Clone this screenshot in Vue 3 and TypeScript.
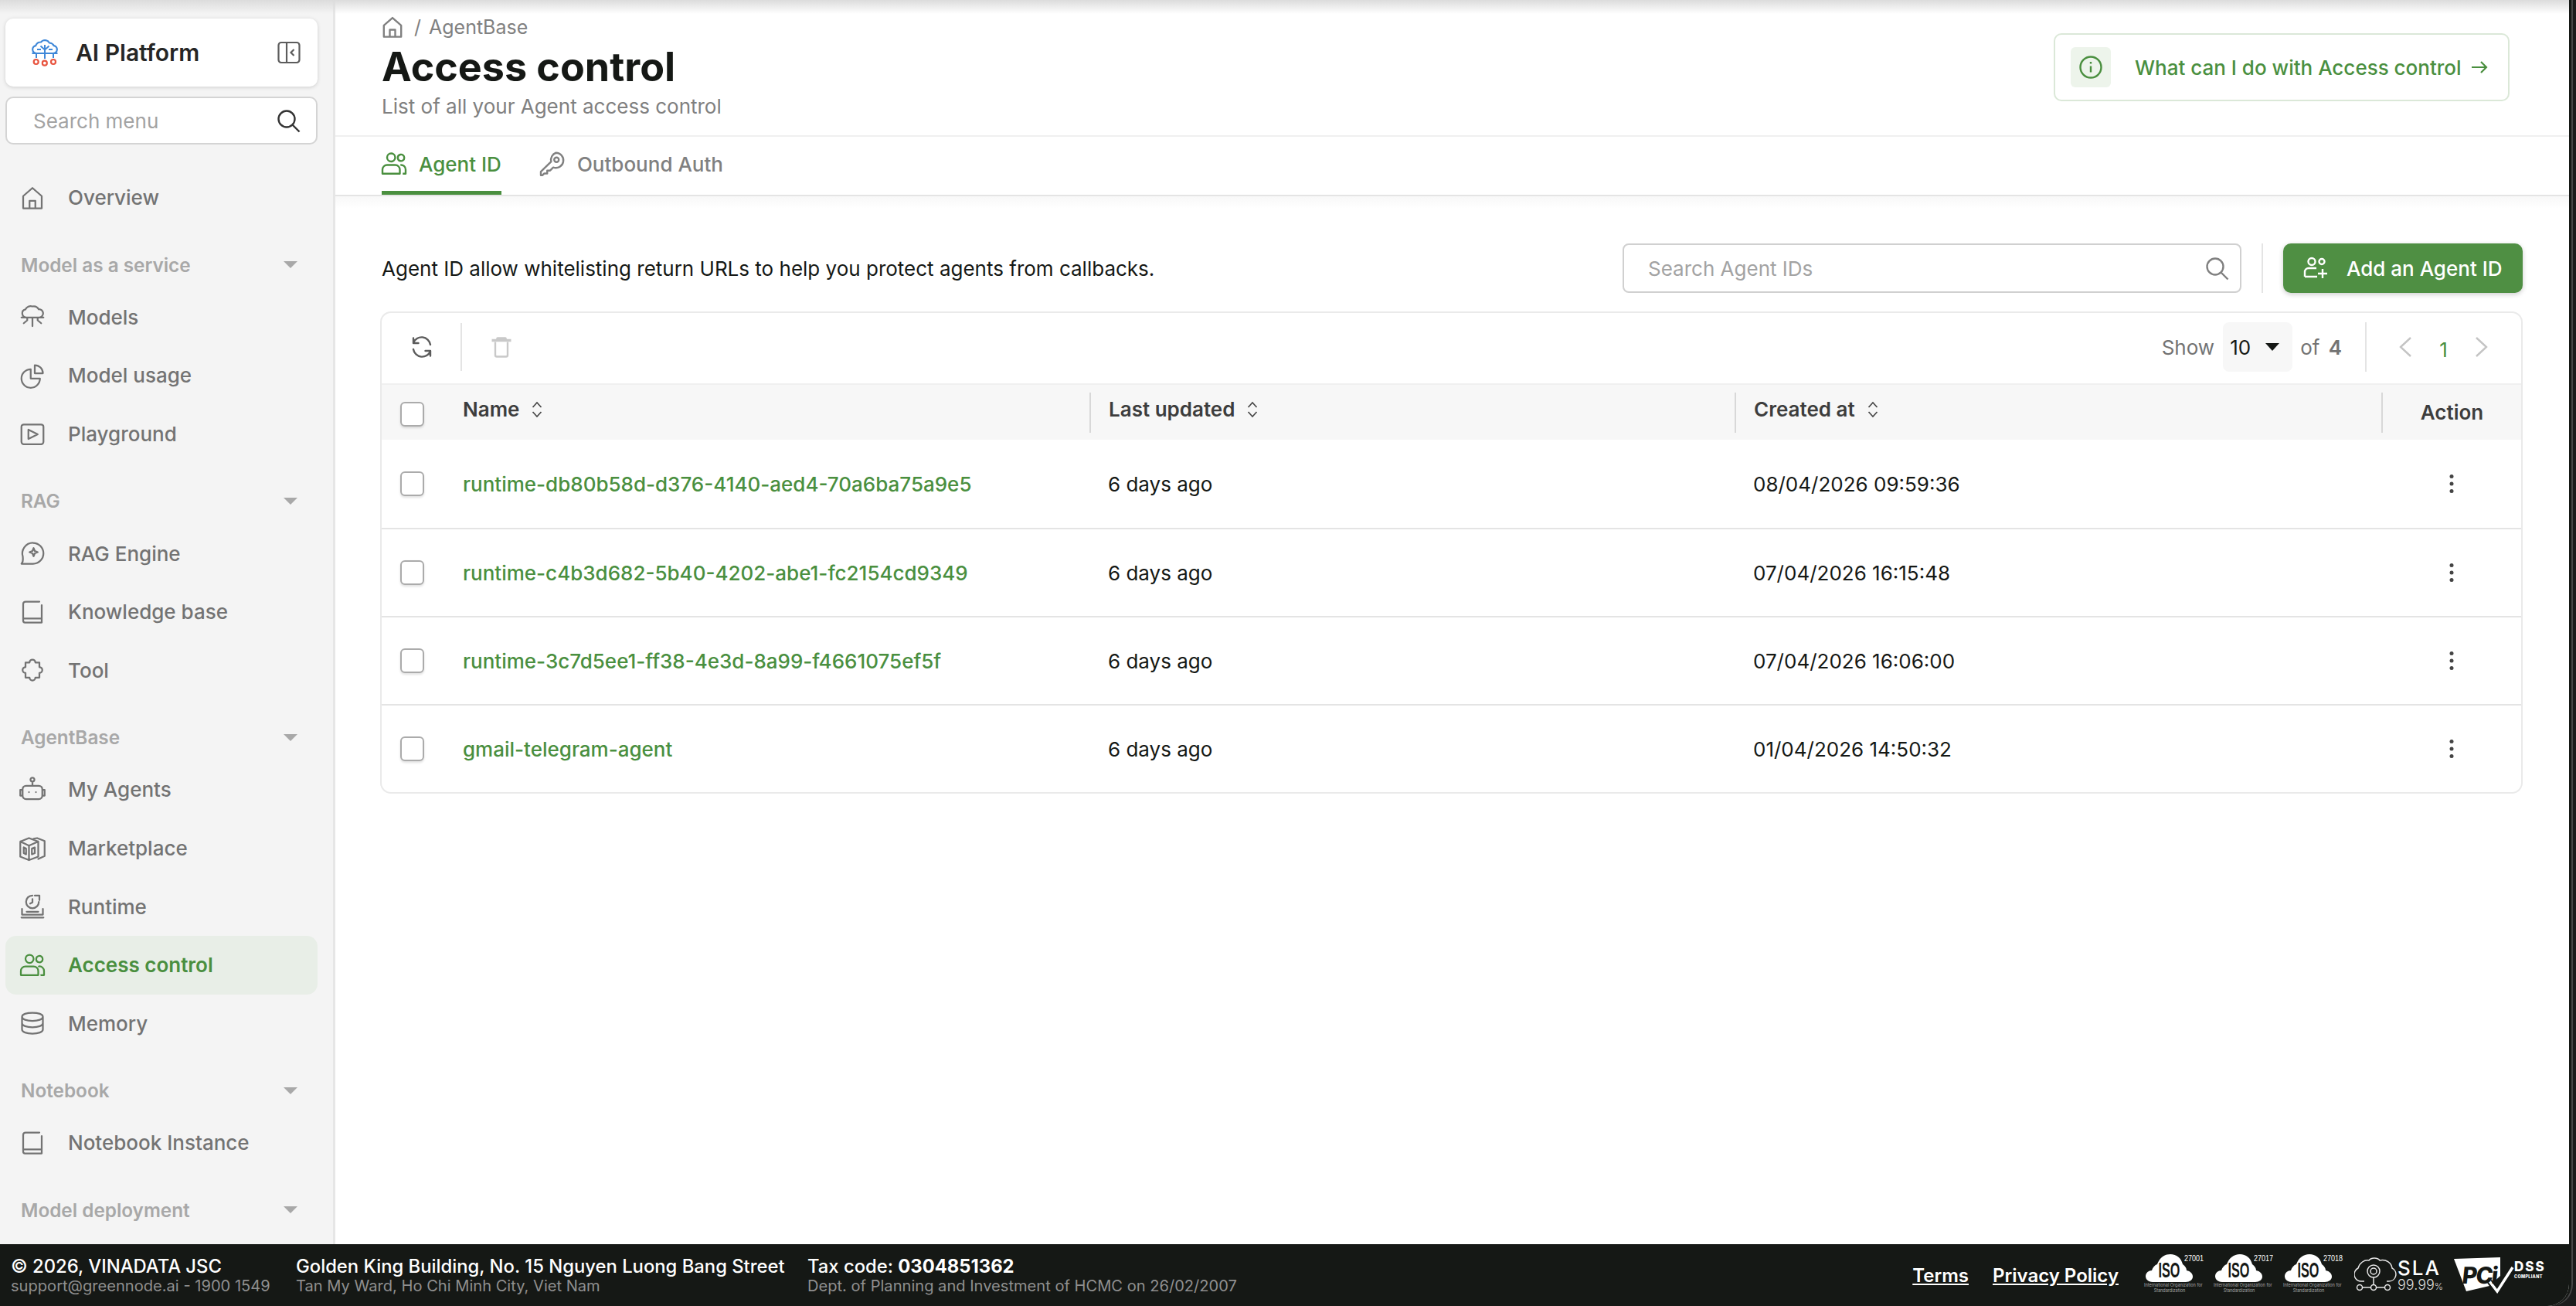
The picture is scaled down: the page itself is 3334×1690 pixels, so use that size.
<script setup lang="ts">
interface NavItem { label: string; icon: string; active?: boolean }
interface NavGroup { title?: string; items: NavItem[] }

const groups: NavGroup[] = [
  { items: [{ label: 'Overview', icon: 'home' }] },
  { title: 'Model as a service', items: [
    { label: 'Models', icon: 'models' },
    { label: 'Model usage', icon: 'pie' },
    { label: 'Playground', icon: 'play' },
  ] },
  { title: 'RAG', items: [
    { label: 'RAG Engine', icon: 'chat' },
    { label: 'Knowledge base', icon: 'book' },
    { label: 'Tool', icon: 'puzzle' },
  ] },
  { title: 'AgentBase', items: [
    { label: 'My Agents', icon: 'robot' },
    { label: 'Marketplace', icon: 'boxes' },
    { label: 'Runtime', icon: 'runtime' },
    { label: 'Access control', icon: 'users', active: true },
    { label: 'Memory', icon: 'db' },
  ] },
  { title: 'Notebook', items: [{ label: 'Notebook Instance', icon: 'book' }] },
  { title: 'Model deployment', items: [] },
]

// stroke icons, 24x24 box
const icons: Record<string, string> = {
  home: 'M4 21V10.5L12 3.5l8 7V21zM9.5 21v-6.5h5V21',
  models: 'M6.5 12.5a3.5 3.5 0 0 1-.6-6.9A5 5 0 0 1 12 3a5 5 0 0 1 5.4 2.5 3.5 3.5 0 0 1 .6 7zM2.5 12.5h19M12 12.5V20M7.5 12.5v2.5l-3 2.5M16.5 12.5v2.5l3 2.5',
  pie: 'M10.5 6.5a8 8 0 1 0 8 8h-8zM14 3a7 7 0 0 1 7 7h-7z',
  play: 'M4.5 3.5h15a2 2 0 0 1 2 2v13a2 2 0 0 1-2 2h-15a2 2 0 0 1-2-2v-13a2 2 0 0 1 2-2zM8.5 8v8l8-4z',
  chat: 'M12.5 3a9 9 0 0 1 0 18H2.5c1.5-1.5 1.5-3 1.2-6A9.2 9.2 0 0 1 12.5 3zM13 7.5l1 2.5 2.5 1-2.5 1-1 2.5-1-2.5-2.5-1 2.5-1z',
  book: 'M18 3H6a2 2 0 0 0-2 2v14.5A1.5 1.5 0 0 0 5.5 21H20V6M5 17.5h15',
  puzzle: 'M9.5 5.5a2.5 2.5 0 1 1 5 0h3.5v4a2.5 2.5 0 1 1 0 5v4h-3.5a2.5 2.5 0 1 1-5 0H6v-4a2.5 2.5 0 1 1 0-5v-4z',
  robot: 'M12 1.5a1.7 1.7 0 1 1 0 3.4 1.7 1.7 0 0 1 0-3.4zM12 5v3.5M6.5 8.5h11a3 3 0 0 1 3 3V17a3 3 0 0 1-3 3h-11a3 3 0 0 1-3-3v-5.5a3 3 0 0 1 3-3zM3.5 12h-2v5h2M20.5 12h2v5h-2M9 14v.01M15 14v.01',
  boxes: 'M9 3l8 3v13l-8 3-7.5-3V6zM1.5 6L9 9.5 17 6M9 9.5V22M13 3.5l3-.5 6.5 2.5v13L17 21M4.5 11v5l2 1v-5zM11.5 12v5l2.5-1v-5z',
  runtime: 'M3 14v5h18v-5M2.5 21.5h19M7 16.5h10M12 2.5a5.5 5.5 0 1 0 5.5 5.500M14 2.500h4v4M12 5.500v3l-2 1',
  users: 'M9.5 3a3.5 3.5 0 1 1 0 7 3.5 3.5 0 0 1 0-7zM17.5 4a2.8 2.8 0 1 1 0 5.5 2.8 2.8 0 0 1 0-5.5zM2 20.5V17a4 4 0 0 1 4-4h7a4 4 0 0 1 4 4v3.500zM17.500 13a4 4 0 0 1 4.500 4v3.500h-2.500',
  db: 'M12 3c5 0 9 1.3 9 3.5s-4 3.5-9 3.5-9-1.3-9-3.5S7 3 12 3zM3 6.5v11C3 19.7 7 21 12 21s9-1.3 9-3.5v-11M3 12c0 2.2 4 3.5 9 3.5s9-1.3 9-3.5',
}

const sortPath = 'M1.5 9L7 3l5.5 6M1.5 15L7 21l5.5-6'

const rows = [
  { name: 'runtime-db80b58d-d376-4140-aed4-70a6ba75a9e5', created: '08/04/2026 09:59:36' },
  { name: 'runtime-c4b3d682-5b40-4202-abe1-fc2154cd9349', created: '07/04/2026 16:15:48' },
  { name: 'runtime-3c7d5ee1-ff38-4e3d-8a99-f4661075ef5f', created: '07/04/2026 16:06:00' },
  { name: 'gmail-telegram-agent', created: '01/04/2026 14:50:32' },
]
const isoBadges = ['27001', '27017', '27018']
</script>

<template>
  <div class="screen">
    <div class="window">
      <div class="workspace">
        <aside class="sidebar">
          <div class="brand">
            <svg class="brand-logo" viewBox="0 0 36 35" fill="none">
              <path d="M7 18a5 5 0 0 1-.8-9.900A7 7 0 0 1 13 3.500 6.800 6.800 0 0 1 18 1a7 7 0 0 1 6 3.500 7 7 0 0 1 5.800 3.600A5 5 0 0 1 29 18z" stroke="#3f88d8" stroke-width="2.200" />
              <path d="M1.500 18h33M18 7v18M12.500 8.500l5.500 5 5.500-5M8 13h5M23 13h5M7 18v6M29 18v6" stroke="#3f88d8" stroke-width="2" />
              <circle cx="6.700" cy="29" r="3" stroke="#e8543f" stroke-width="2.200" />
              <circle cx="17.800" cy="30.700" r="3" stroke="#e8543f" stroke-width="2.200" />
              <circle cx="29" cy="29" r="3" stroke="#e8543f" stroke-width="2.200" />
            </svg>
            <span class="brand-name">AI Platform</span>
            <svg class="brand-toggle" viewBox="0 0 30 30" fill="none" stroke="#5c5c5c" stroke-width="2.200">
              <rect x="1.500" y="2" width="27" height="26" rx="3.500" />
              <path d="M12 2v26M21.500 11l-4 4 4 4" />
            </svg>
          </div>
          <div class="menu-search">
            <span>Search menu</span>
            <svg viewBox="0 0 32 32" fill="none" stroke="#333" stroke-width="2.400">
              <circle cx="14" cy="14" r="10.500" />
              <path d="M21.500 21.500l9 9" />
            </svg>
          </div>
          <nav class="nav">
            <section v-for="(group, g) in groups" :key="g" class="nav-group">
              <div v-if="group.title" class="nav-title">
                <span>{{ group.title }}</span>
                <i class="nav-caret"></i>
              </div>
              <a v-for="item in group.items" :key="item.label" class="nav-item" :class="{ active: item.active }">
                <svg viewBox="2 2 20 20" fill="none" stroke="currentColor" stroke-width="1.500" stroke-linejoin="round" stroke-linecap="round">
                  <path :d="icons[item.icon]" />
                </svg>
                <span>{{ item.label }}</span>
              </a>
            </section>
          </nav>
        </aside>

        <main class="main">
          <header class="page-head">
            <div>
              <div class="crumbs">
                <svg viewBox="2 2 20 20" fill="none" stroke="#808080" stroke-width="1.700" stroke-linejoin="round">
                  <path :d="icons.home" />
                </svg>
                <span>/</span>
                <span>AgentBase</span>
              </div>
              <h1>Access control</h1>
              <p>List of all your Agent access control</p>
            </div>
            <a class="help">
              <span class="help-icon">
                <svg viewBox="0 0 32 32" fill="none" stroke="#4a8f3f" stroke-width="2.400">
                  <circle cx="16" cy="16" r="13.500" />
                  <path d="M16 14.500v8M16 9v2.600" />
                </svg>
              </span>
              <span class="help-text">What can I do with Access control</span>
              <svg class="help-arrow" viewBox="0 0 22 18" fill="none" stroke="#4a8f3f" stroke-width="2.200">
                <path d="M1 9h19M13 2l7 7-7 7" />
              </svg>
            </a>
          </header>

          <div class="tabs">
            <a class="tab active">
              <svg viewBox="2 2 20 20" fill="none" stroke="currentColor" stroke-width="1.600" stroke-linejoin="round">
                <path :d="icons.users" />
              </svg>
              Agent ID
            </a>
            <a class="tab">
              <svg viewBox="2 2 20 20" fill="none" stroke="currentColor" stroke-width="1.600" stroke-linejoin="round">
                <path d="M15 2.500a6.500 6.500 0 1 1-2.300 12.600L10 17.800H7.500v2.500H5l-1.500 1.500H2v-3l8.900-8.700A6.500 6.500 0 0 1 15 2.500z" />
                <circle cx="15.500" cy="8.500" r="2" />
              </svg>
              Outbound Auth
            </a>
          </div>

          <div class="content">
            <div class="intro">
              <p>Agent ID allow whitelisting return URLs to help you protect agents from callbacks.</p>
              <div class="agent-search">
                <span>Search Agent IDs</span>
                <svg viewBox="0 0 32 32" fill="none" stroke="#808080" stroke-width="2.400">
                  <circle cx="14" cy="14" r="10.500" />
                  <path d="M21.500 21.500l9 9" />
                </svg>
              </div>
              <i class="vline"></i>
              <button class="add-btn">
                <svg viewBox="0 0 32 32" fill="none" stroke="#fff" stroke-width="2.400">
                  <circle cx="11" cy="7.500" r="4.500" />
                  <circle cx="24" cy="7.500" r="3.500" />
                  <path d="M2 27v-6a5 5 0 0 1 5-5h10M2 27h16M25 17v12M19 23h12" />
                </svg>
                Add an Agent ID
              </button>
            </div>

            <div class="card">
              <div class="card-bar">
                <button class="bar-btn">
                  <svg viewBox="0 0 28 28" fill="none" stroke="#5c5c5c" stroke-width="2.400" stroke-linecap="round" stroke-linejoin="round">
                    <path d="M3 8.500A11.500 11.500 0 0 1 25 11M3 2.500v6.500h6.500M25 19.500A11.500 11.500 0 0 1 3 17M25 25.500V19h-6.500" />
                  </svg>
                </button>
                <i class="bar-line"></i>
                <button class="bar-btn">
                  <svg viewBox="0 0 28 28" fill="none" stroke="#c9c9c9" stroke-width="2.400" stroke-linejoin="round">
                    <path d="M6 7.500v17a2 2 0 0 0 2 2h12a2 2 0 0 0 2-2v-17" />
                    <path d="M1.500 5.500h25M9 5.500V3h10v2.500" stroke-width="3.600" />
                  </svg>
                </button>
                <div class="pager">
                  <span class="pager-label">Show</span>
                  <span class="page-size">10<i></i></span>
                  <span class="pager-label">of <b>4</b></span>
                  <i class="pager-line"></i>
                  <svg class="chev" viewBox="0 0 18 28" fill="none" stroke="#c4c4c4" stroke-width="2.400"><path d="M16 2L3 14l13 12" /></svg>
                  <span class="page-no">1</span>
                  <svg class="chev" viewBox="0 0 18 28" fill="none" stroke="#c4c4c4" stroke-width="2.400"><path d="M2 2l13 12L2 26" /></svg>
                </div>
              </div>

              <div class="row head">
                <div class="cell-check"><i class="check"></i></div>
                <div class="cell-name">Name
                  <svg class="sort" viewBox="0 0 14 24" fill="none" stroke="#444" stroke-width="1.600"><path :d="sortPath" /></svg>
                </div>
                <div class="cell">Last updated
                  <svg class="sort" viewBox="0 0 14 24" fill="none" stroke="#444" stroke-width="1.600"><path :d="sortPath" /></svg>
                </div>
                <div class="cell">Created at
                  <svg class="sort" viewBox="0 0 14 24" fill="none" stroke="#444" stroke-width="1.600"><path :d="sortPath" /></svg>
                </div>
                <div class="cell-action">Action</div>
              </div>

              <div v-for="row in rows" :key="row.name" class="row">
                <div class="cell-check"><i class="check"></i></div>
                <a class="cell-name link">{{ row.name }}</a>
                <div class="cell">6 days ago</div>
                <div class="cell">{{ row.created }}</div>
                <div class="cell-action">
                  <svg class="kebab" viewBox="0 0 6 26" fill="#444">
                    <circle cx="3" cy="3.500" r="2.500" /><circle cx="3" cy="13" r="2.500" /><circle cx="3" cy="22.500" r="2.500" />
                  </svg>
                </div>
              </div>
            </div>
          </div>
        </main>
      </div>

      <footer class="footer">
        <div class="foot-col first">
          <div class="foot-main">© 2026, VINADATA JSC</div>
          <div class="foot-sub">support@greennode.ai - 1900 1549</div>
        </div>
        <div class="foot-col second">
          <div class="foot-main">Golden King Building, No. 15 Nguyen Luong Bang Street</div>
          <div class="foot-sub">Tan My Ward, Ho Chi Minh City, Viet Nam</div>
        </div>
        <div class="foot-col">
          <div class="foot-main">Tax code: <b>0304851362</b></div>
          <div class="foot-sub">Dept. of Planning and Investment of HCMC on 26/02/2007</div>
        </div>
        <div class="foot-right">
          <a class="foot-link">Terms</a>
          <a class="foot-link">Privacy Policy</a>
          <div class="badges">
            <div v-for="iso in isoBadges" :key="iso" class="iso">
              <svg viewBox="0 0 61 36" fill="#fff">
                <path d="M9 36C3 36 0 32 0 28.500 0 24 4 21 8 21 9 17 12 14 15 13 18 5 24 0 32 0 40 0 46 5 48 13 51 15 53 18 53 21 58 22 61 25 61 29 61 33 57 36 52 36Z" />
              </svg>
              <span class="iso-word">ISO</span>
              <span class="iso-no">{{ iso }}</span>
              <span class="iso-cap">International Organization for<br />Standardization</span>
            </div>
            <div class="sla">
              <svg viewBox="0 0 56 46" fill="none" stroke="#e8e8e8" stroke-width="1.500">
                <path d="M13 31H10A9 9 0 0 1 5 14C7 7 13 3 19 4c3-4 11-4 14 0 8-2 15 3 16 10a9 9 0 0 1-4 17H42" />
                <circle cx="25" cy="18" r="8" />
                <circle cx="25" cy="18" r="4" />
                <path d="M25 26v13M8 39h34" />
                <circle cx="7" cy="39" r="3.500" fill="#151815" />
                <circle cx="25" cy="39" r="3.500" fill="#151815" />
                <circle cx="43" cy="39" r="3.500" fill="#151815" />
              </svg>
              <div class="sla-text">
                <span class="sla-word">SLA</span>
                <span class="sla-num">99.99<small>%</small></span>
              </div>
            </div>
            <div class="pci">
              <svg viewBox="0 0 82 48" class="pci-shape">
                <polygon points="0,3 60,1 60,25 46,38 16,45" fill="#fff" />
                <path d="M46 32l10 15 20-33" fill="none" stroke="#151815" stroke-width="7" />
                <path d="M46 32l10 13 20-31" fill="none" stroke="#fff" stroke-width="3.500" />
              </svg>
              <span class="pci-word">PCi</span>
              <span class="dss">DSS<small>COMPLIANT</small></span>
            </div>
          </div>
        </div>
      </footer>
    </div>
  </div>
</template>

<style>
html, body { margin: 0; padding: 0; background: #1c1c1c; }
</style>

<style scoped>
* { box-sizing: border-box; }

.screen {
  width: 100vw;
  height: 100vh;
  overflow: hidden;
  padding-right: 9px;
  background: #1c1c1c;
  font-family: Inter, "Noto Sans", sans-serif;
  color: #151815;
}

.window {
  height: 100%;
  display: flex;
  flex-direction: column;
  background: #fff;
  border-radius: 0 0 28px 0;
  box-shadow: 3px 0 0 0 #151815, 5px 0 0 0 #474747;
  overflow: hidden;
}

.workspace {
  flex: 1;
  min-height: 0;
  display: flex;
  position: relative;
}

/* thin grey fade along the top edge of the window */
.workspace::before {
  content: "";
  position: absolute;
  inset: 0 0 auto 0;
  height: 18px;
  background: linear-gradient(#dcdcdc, rgba(255, 255, 255, 0));
  pointer-events: none;
  z-index: 2;
}

.sidebar {
  width: 434px;
  flex: none;
  padding: 24px 20px 0 7px;
  background: #f4f4f4;
  border-right: 3px solid #e6e6e6;
  overflow: hidden;
}

.brand {
  height: 88px;
  display: flex;
  align-items: center;
  padding: 0 22px 0 33px;
  background: #fff;
  border-radius: 10px;
  box-shadow: 0 1px 5px rgba(0, 0, 0, 0.16);
}

.brand-logo { width: 36px; height: 35px; }
.brand-name { margin-left: 22px; font-size: 30px; font-weight: 600; color: #262626; flex: 1; }
.brand-toggle { width: 30px; height: 30px; }

.menu-search {
  height: 62px;
  margin-top: 13px;
  padding: 0 20px 0 34px;
  display: flex;
  align-items: center;
  justify-content: space-between;
  background: #fff;
  border: 2px solid #d4d4d4;
  border-radius: 10px;
  font-size: 26px;
  color: #a3a3a3;
}

.menu-search svg { width: 32px; height: 32px; }

.nav { margin-top: 31px; }

.nav-group { margin-bottom: 19px; }

.nav-title {
  height: 60px;
  display: flex;
  align-items: center;
  justify-content: space-between;
  padding: 0 26px 0 20px;
  font-size: 24.3px;
  font-weight: 600;
  color: #a8a8a8;
}

.nav-caret {
  border-left: 9px solid transparent;
  border-right: 9px solid transparent;
  border-top: 9px solid #a8a8a8;
}

.nav-item {
  height: 75.6px;
  display: flex;
  align-items: center;
  gap: 31px;
  padding-left: 20px;
  border-radius: 14px;
  font-size: 26px;
  font-weight: 500;
  color: #737373;
}

.nav-item svg { width: 30px; height: 30px; flex: none; overflow: visible; }

.nav-item.active {
  background: #e8eee7;
  color: #4a8f3f;
  font-weight: 600;
}

.main {
  flex: 1;
  min-width: 0;
  display: flex;
  flex-direction: column;
}

.page-head {
  height: 177px;
  padding: 20px 77px 0 60px;
  display: flex;
  justify-content: space-between;
  align-items: flex-start;
  border-bottom: 2px solid #f0f0f0;
}

.crumbs {
  display: flex;
  align-items: center;
  gap: 10px;
  height: 30px;
  font-size: 25px;
  color: #808080;
}

.crumbs svg { width: 28px; height: 28px; margin-right: 4px; }

h1 {
  margin: 7px 0 0;
  font-size: 52px;
  line-height: 60px;
  font-weight: 700;
  color: #151815;
}

.page-head p {
  margin: 4px 0 0;
  font-size: 26px;
  line-height: 34px;
  color: #808080;
}

.help {
  margin-top: 23px;
  width: 590px;
  height: 88px;
  display: flex;
  align-items: center;
  padding: 0 26px 0 20px;
  border: 2px solid #dbe8d8;
  border-radius: 10px;
  color: #4a8f3f;
  font-size: 26px;
  font-weight: 500;
}

.help-icon {
  width: 52px;
  height: 52px;
  flex: none;
  display: flex;
  align-items: center;
  justify-content: center;
  background: #edf4eb;
  border-radius: 6px;
}

.help-icon svg { width: 32px; height: 32px; }
.help-text { margin-left: 31px; flex: 1; white-space: nowrap; }
.help-arrow { width: 22px; height: 18px; flex: none; }

.tabs {
  height: 77px;
  padding-left: 60px;
  display: flex;
  gap: 50px;
  border-bottom: 2px solid #e4e4e4;
}

.tab {
  height: 75px;
  display: flex;
  align-items: center;
  gap: 17px;
  font-size: 26px;
  font-weight: 500;
  color: #808080;
  border-bottom: 5px solid transparent;
}

.tab svg { width: 30px; height: 30px; overflow: visible; margin-left: 1px; }
.tab.active { color: #4a8f3f; border-bottom-color: #4a8f3f; }

.content {
  flex: 1;
  padding: 61px 60px 0 58px;
  background: linear-gradient(#f8f8f8, #fff 16px);
}

.intro {
  height: 64px;
  display: flex;
  align-items: center;
}

.intro p {
  flex: 1;
  margin: 0 0 0 2px;
  font-size: 26px;
  color: #151815;
}

.agent-search {
  width: 801px;
  height: 64px;
  padding: 0 14px 0 31px;
  display: flex;
  align-items: center;
  justify-content: space-between;
  border: 2px solid #d0d0d0;
  border-radius: 8px;
  font-size: 26px;
  color: #a3a3a3;
}

.agent-search svg { width: 32px; height: 32px; }

.vline {
  width: 2px;
  height: 64px;
  margin: 0 26px;
  background: #e4e4e4;
}

.add-btn {
  width: 310px;
  height: 64px;
  display: flex;
  align-items: center;
  gap: 24px;
  padding: 0 0 0 26px;
  border: 0;
  border-radius: 10px;
  background: #4f8f43;
  box-shadow: 0 2px 6px rgba(0, 0, 0, 0.2);
  color: #fff;
  font: 500 26px Inter, sans-serif;
}

.add-btn svg { width: 32px; height: 32px; }

.card {
  margin-top: 24px;
  border: 2px solid #eaeaea;
  border-radius: 14px;
  overflow: hidden;
}

.card-bar {
  height: 91px;
  padding: 0 0 3px 38px;
  display: flex;
  align-items: center;
}

.bar-btn {
  display: flex;
  padding: 0;
  border: 0;
  background: none;
}

.bar-btn svg { width: 28px; height: 28px; }

.bar-line {
  width: 2px;
  height: 62px;
  margin: 0 37px 0 36px;
  background: #e4e4e4;
}

.pager {
  margin-left: auto;
  padding-right: 42px;
  display: flex;
  align-items: center;
  font-size: 26px;
  color: #737373;
}

.pager b { font-weight: 600; color: #737373; margin-left: 4px; }

.page-size {
  width: 90px;
  height: 64px;
  margin: 0 10px 0 11px;
  padding: 0 17px 0 9px;
  display: flex;
  align-items: center;
  justify-content: space-between;
  background: #f7f7f7;
  border-radius: 8px;
  color: #151815;
}

.page-size i {
  border-left: 9px solid transparent;
  border-right: 9px solid transparent;
  border-top: 10px solid #151815;
}

.pager-line {
  width: 2px;
  height: 64px;
  margin: 0 41px 0 30px;
  background: #e4e4e4;
}

.chev { width: 18px; height: 28px; }
.page-no { width: 81px; text-align: center; color: #4a8f3f; padding-top: 6px; }

.row {
  height: 114px;
  display: grid;
  grid-template-columns: 105px 811px 835px 837px 1fr;
  align-items: center;
  font-size: 26px;
  border-top: 2px solid #e4e4e4;
}

.row.head {
  height: 73px;
  background: #f7f7f7;
  border-top: 2px solid #f0f0f0;
  font-weight: 600;
  color: #3d3d3d;
}

/* first data row sits directly under the grey header */
.row.head + .row { border-top: 0; }

.cell-check { padding-left: 24px; display: flex; }
.head .cell-check { padding-top: 4px; }

.check {
  width: 31px;
  height: 32px;
  background: #fff;
  border: 2px solid #ababab;
  border-radius: 6px;
  box-shadow: 0 2px 3px rgba(0, 0, 0, 0.12);
}

.cell-name,
.cell {
  display: flex;
  align-items: center;
  gap: 16px;
}

.head .cell-name,
.head .cell { padding-bottom: 8px; }

.cell { padding-left: 24px; }
.head .cell { padding-left: 23px; }

.head .cell,
.head .cell-action { height: 52px; border-left: 2px solid #d8d8d8; }

.cell-action { display: flex; align-items: center; justify-content: center; }

.link { color: #4a8f3f; font-weight: 500; }

.sort { width: 14px; height: 24px; }
.kebab { width: 6px; height: 26px; }

.footer {
  height: 80px;
  flex: none;
  display: flex;
  align-items: center;
  padding-left: 14px;
  background: #151815;
  color: #fff;
}

.foot-col { flex: none; }
.foot-col.first { width: 369px; }
.foot-col.second { width: 662px; }
.foot-main { font-size: 23.8px; line-height: 28px; font-weight: 500; }
.foot-main b { font-weight: 700; }
.foot-sub { font-size: 20.1px; line-height: 22px; color: #8f8f8f; }

.foot-right {
  margin-left: auto;
  padding-right: 29px;
  display: flex;
  align-items: center;
}

.foot-link {
  margin-right: 31px;
  font-size: 24px;
  font-weight: 600;
  text-decoration: underline;
}

.foot-link + .foot-link { margin-right: 35px; }

.badges { display: flex; align-items: center; }

.iso {
  width: 90px;
  height: 54px;
  position: relative;
}

.iso svg { position: absolute; left: 0; top: 0; width: 61px; height: 36px; }

.iso-word {
  position: absolute;
  left: 0;
  top: 6px;
  width: 61px;
  text-align: center;
  font: 700 28px/30px "Liberation Sans", sans-serif;
  color: #151815;
  transform: scaleX(0.58);
}

.iso-no {
  position: absolute;
  left: 50px;
  top: -1px;
  font: 11px/12px "Liberation Sans", sans-serif;
  transform: scaleX(0.82);
  transform-origin: left;
}

.iso-cap {
  position: absolute;
  left: -2px;
  top: 37px;
  width: 66px;
  font-size: 5.5px;
  line-height: 7px;
  text-align: center;
  color: #aaa;
  white-space: nowrap;
}

.sla { display: flex; width: 129px; height: 46px; }
.sla svg { width: 56px; height: 46px; flex: none; }
.sla-text { display: flex; flex-direction: column; }
.sla-word { font-size: 26px; line-height: 27px; font-weight: 500; letter-spacing: 2px; }
.sla-num { font-size: 18px; line-height: 17px; font-weight: 300; color: #ddd; }
.sla-num small { font-size: 12px; }

.pci { position: relative; width: 120px; height: 48px; }
.pci-shape { width: 82px; height: 48px; }

.pci-word {
  position: absolute;
  left: 11px;
  top: 9px;
  font: 800 30px/30px Inter, sans-serif;
  color: #151815;
  letter-spacing: -2px;
  transform: skewX(-6deg);
}

.dss {
  position: absolute;
  left: 78px;
  top: 6px;
  font-size: 17px;
  line-height: 15px;
  font-weight: 800;
  letter-spacing: 2px;
}

.dss small {
  display: block;
  margin-top: 2px;
  font-size: 5.5px;
  line-height: 6px;
  letter-spacing: 0.3px;
}
</style>
